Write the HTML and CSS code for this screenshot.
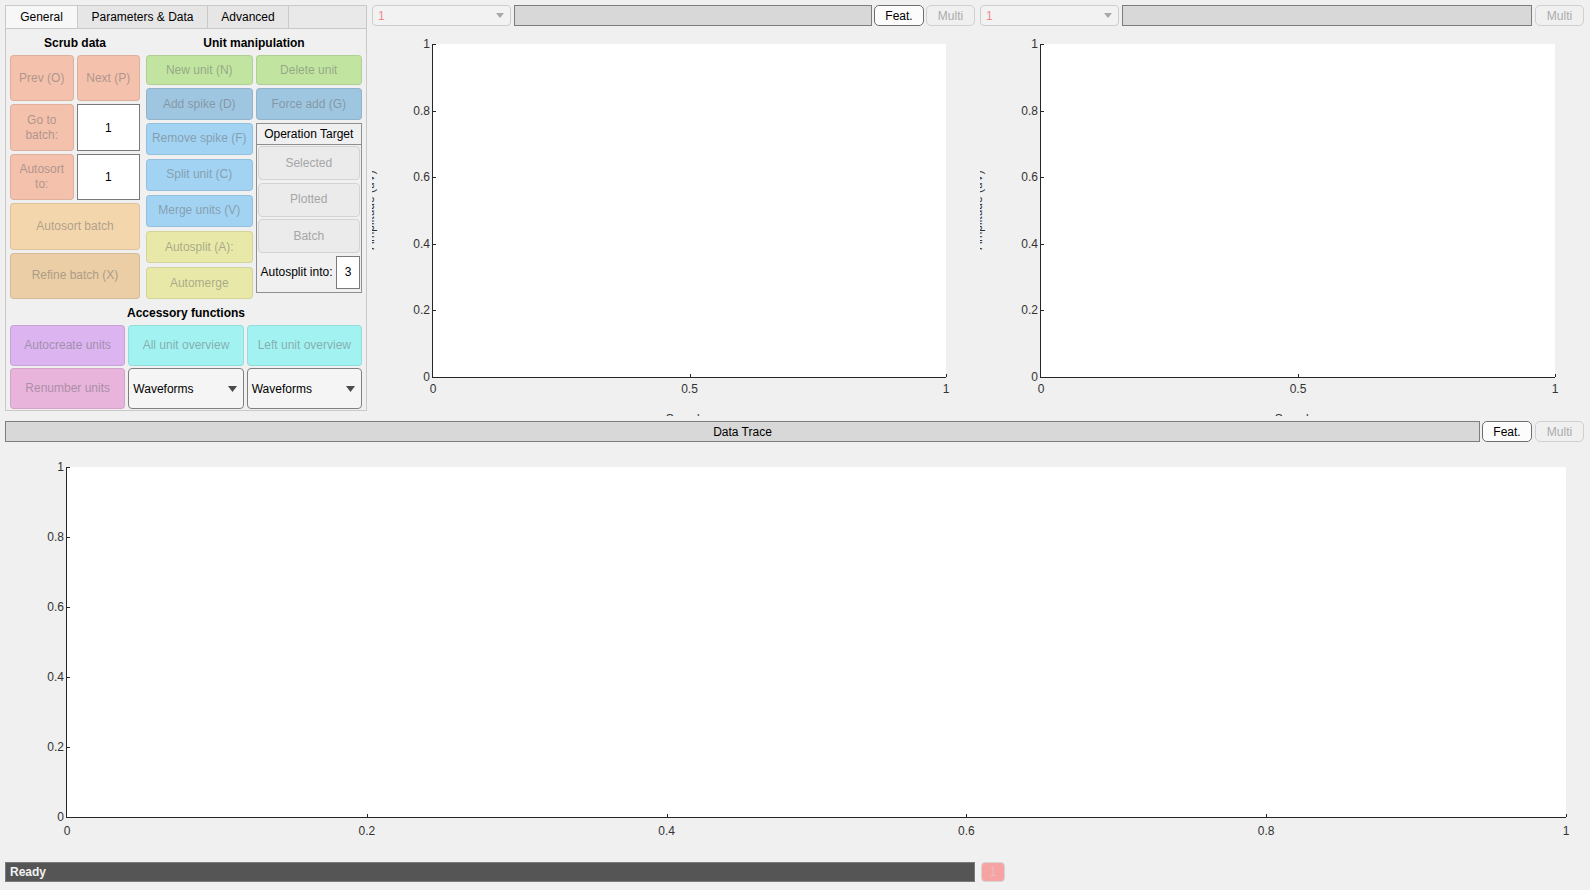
FILE: index.html
```html
<!DOCTYPE html>
<html>
<head>
<meta charset="utf-8">
<title>Spike sorter</title>
<link rel="stylesheet" href="styles.css">
</head>
<body>
<div class="app">
  <div class="top">
    <section class="panel">
      <div class="tabs">
        <div class="tab tab-general tab-active">General</div>
        <div class="tab tab-params">Parameters &amp; Data</div>
        <div class="tab tab-adv">Advanced</div>
        <div class="tab tab-fill"></div>
      </div>
      <div class="panel-body">
        <div class="section-row">
          <div class="scrub">
            <h3 class="heading">Scrub data</h3>
            <div class="scrub-grid">
              <div class="btn c-salmon">Prev (O)</div>
              <div class="btn c-salmon">Next (P)</div>
              <div class="btn c-salmon">Go to batch:</div>
              <div class="field">1</div>
              <div class="btn c-salmon">Autosort to:</div>
              <div class="field">1</div>
              <div class="btn c-peach span2">Autosort batch</div>
              <div class="btn c-tan span2">Refine batch (X)</div>
            </div>
          </div>
          <div class="unit">
            <h3 class="heading">Unit manipulation</h3>
            <div class="unit-grid">
              <div class="btn c-green">New unit (N)</div>
              <div class="btn c-green">Delete unit</div>
              <div class="btn c-steel">Add spike (D)</div>
              <div class="btn c-steel">Force add (G)</div>
              <div class="unit-col">
                <div class="btn c-sky">Remove spike (F)</div>
                <div class="btn c-sky">Split unit (C)</div>
                <div class="btn c-sky">Merge units (V)</div>
                <div class="btn c-yellow">Autosplit (A):</div>
                <div class="btn c-yellow">Automerge</div>
              </div>
              <div class="optarget">
                <div class="optarget-title">Operation Target</div>
                <div class="optarget-list">
                  <div class="btn btn-gray">Selected</div>
                  <div class="btn btn-gray">Plotted</div>
                  <div class="btn btn-gray">Batch</div>
                  <div class="split-row">
                    <span>Autosplit into:</span>
                    <div class="split-input">3</div>
                  </div>
                </div>
              </div>
            </div>
          </div>
        </div>
        <h3 class="heading acc-heading">Accessory functions</h3>
        <div class="acc-grid">
          <div class="btn c-violet">Autocreate units</div>
          <div class="btn c-cyan">All unit overview</div>
          <div class="btn c-cyan">Left unit overview</div>
          <div class="btn c-pink">Renumber units</div>
          <div class="select">
            <span>Waveforms</span>
            <svg class="sel-arrow" width="9" height="6" viewBox="0 0 9 6"><path d="M0 0H9L4.5 6Z" fill="#4a4a4a"/></svg>
          </div>
          <div class="select">
            <span>Waveforms</span>
            <svg class="sel-arrow" width="9" height="6" viewBox="0 0 9 6"><path d="M0 0H9L4.5 6Z" fill="#4a4a4a"/></svg>
          </div>
        </div>
      </div>
    </section>

    <div class="axcol axcol-1">
      <div class="axhead">
        <div class="dd"><span>1</span><svg width="8" height="5" viewBox="0 0 8 5"><path d="M0 0H8L4 5Z" fill="#a8a8a8"/></svg></div>
        <div class="graybar"></div>
        <div class="hbtn hbtn-feat">Feat.</div>
        <div class="hbtn hbtn-multi">Multi</div>
      </div>
      <div class="axes">
        <div class="plot">
          <span class="yt" style="top:0%"></span>
          <span class="yt" style="top:20%"></span>
          <span class="yt" style="top:40%"></span>
          <span class="yt" style="top:60%"></span>
          <span class="yt" style="top:80%"></span>
          <span class="yl" style="top:0%">1</span>
          <span class="yl" style="top:20%">0.8</span>
          <span class="yl" style="top:40%">0.6</span>
          <span class="yl" style="top:60%">0.4</span>
          <span class="yl" style="top:80%">0.2</span>
          <span class="yl" style="top:100%">0</span>
          <span class="xt" style="left:50%"></span>
          <span class="xt" style="left:100%"></span>
          <span class="xl" style="left:0%">0</span>
          <span class="xl" style="left:50%">0.5</span>
          <span class="xl" style="left:100%">1</span>
        </div>
        <span class="ylabel">Amplitude (uV)</span>
        <span class="xlabel">Samples</span>
      </div>
    </div>

    <div class="axcol axcol-2">
      <div class="axhead">
        <div class="dd"><span>1</span><svg width="8" height="5" viewBox="0 0 8 5"><path d="M0 0H8L4 5Z" fill="#a8a8a8"/></svg></div>
        <div class="graybar"></div>
        <div class="hbtn hbtn-multi hbtn-wide">Multi</div>
      </div>
      <div class="axes axes-2">
        <div class="plot">
          <span class="yt" style="top:0%"></span>
          <span class="yt" style="top:20%"></span>
          <span class="yt" style="top:40%"></span>
          <span class="yt" style="top:60%"></span>
          <span class="yt" style="top:80%"></span>
          <span class="yl" style="top:0%">1</span>
          <span class="yl" style="top:20%">0.8</span>
          <span class="yl" style="top:40%">0.6</span>
          <span class="yl" style="top:60%">0.4</span>
          <span class="yl" style="top:80%">0.2</span>
          <span class="yl" style="top:100%">0</span>
          <span class="xt" style="left:50%"></span>
          <span class="xt" style="left:100%"></span>
          <span class="xl" style="left:0%">0</span>
          <span class="xl" style="left:50%">0.5</span>
          <span class="xl" style="left:100%">1</span>
        </div>
        <span class="ylabel">Amplitude (uV)</span>
        <span class="xlabel">Samples</span>
      </div>
    </div>
  </div>

  <div class="tracebar">
    <div class="tracetitle">Data Trace</div>
    <div class="hbtn hbtn-feat">Feat.</div>
    <div class="hbtn hbtn-multi hbtn-wide">Multi</div>
  </div>

  <div class="trace-axes">
    <div class="plot plot-trace">
      <span class="yt" style="top:0%"></span>
      <span class="yt" style="top:20%"></span>
      <span class="yt" style="top:40%"></span>
      <span class="yt" style="top:60%"></span>
      <span class="yt" style="top:80%"></span>
      <span class="yl" style="top:0%">1</span>
      <span class="yl" style="top:20%">0.8</span>
      <span class="yl" style="top:40%">0.6</span>
      <span class="yl" style="top:60%">0.4</span>
      <span class="yl" style="top:80%">0.2</span>
      <span class="yl" style="top:100%">0</span>
      <span class="xt" style="left:20%"></span>
      <span class="xt" style="left:40%"></span>
      <span class="xt" style="left:60%"></span>
      <span class="xt" style="left:80%"></span>
      <span class="xt" style="left:100%"></span>
      <span class="xl" style="left:0%">0</span>
      <span class="xl" style="left:20%">0.2</span>
      <span class="xl" style="left:40%">0.4</span>
      <span class="xl" style="left:60%">0.6</span>
      <span class="xl" style="left:80%">0.8</span>
      <span class="xl" style="left:100%">1</span>
    </div>
  </div>

  <div class="statusrow">
    <div class="status">Ready</div>
    <div class="badge">1</div>
  </div>
</div>
</body>
</html>
```

FILE: styles.css
```css
* { box-sizing: border-box; }
html, body { margin: 0; padding: 0; }
body {
  background: #f0f0f0;
  font-family: "Liberation Sans", Arial, sans-serif;
  font-size: 12px;
  color: #000;
  width: 1590px;
  height: 890px;
  overflow: hidden;
}
.app {
  display: flex;
  flex-direction: column;
  padding: 5px 6px 0 5px;
  height: 890px;
}
.top {
  display: flex;
  gap: 5px;
  height: 411px;
  flex: none;
}

/* ---------- left panel ---------- */
.panel {
  width: 362px;
  height: 406px;
  flex: none;
  display: flex;
  flex-direction: column;
}
.tabs { display: flex; height: 23px; flex: none; }
.tab {
  height: 23px;
  line-height: 22px;
  text-align: center;
  background: #e6e6e6;
  border-top: 1px solid #c9c9c9;
  border-right: 1px solid #c9c9c9;
}
.tab-general { width: 73px; border-left: 1px solid #c9c9c9; }
.tab-params { width: 130px; }
.tab-adv { width: 81px; }
.tab-fill { flex: 1; background: #e9e9e9; }
.tab-active { background: #f7f7f7; }

.panel-body {
  flex: 1;
  border: 1px solid #c9c9c9;
  padding: 4px 4px 1px;
  display: flex;
  flex-direction: column;
}
.section-row { display: flex; gap: 6px; }
.scrub { width: 130px; flex: none; display: flex; flex-direction: column; gap: 2px; }
.unit { flex: 1; display: flex; flex-direction: column; gap: 2px; }
.heading {
  margin: 0;
  height: 20px;
  line-height: 20px;
  font-size: 12px;
  font-weight: bold;
  text-align: center;
}
.scrub-grid {
  display: grid;
  grid-template-columns: 1fr 1fr;
  grid-template-rows: repeat(5, 1fr);
  gap: 3px;
  height: 244px;
}
.span2 { grid-column: span 2; }
.unit-grid {
  display: grid;
  grid-template-columns: 1fr 1fr;
  grid-template-rows: 30px 32px 1fr;
  gap: 3px;
  height: 244px;
}
.unit-col { display: flex; flex-direction: column; gap: 4.5px; }
.unit-col .btn { flex: 1; }
.acc-heading { margin-top: 4px; }
.acc-grid {
  margin-top: 2px;
  display: grid;
  grid-template-columns: repeat(3, 1fr);
  grid-template-rows: 41px 41px;
  gap: 2px 3px;
}

.btn {
  border: 1px solid rgba(0, 0, 0, 0.09);
  border-radius: 4px;
  color: rgba(105, 105, 105, 0.5);
  display: flex;
  align-items: center;
  justify-content: center;
  text-align: center;
  padding: 0 3px;
  line-height: 15px;
}
.c-salmon { background: #f4c1ad; }
.c-peach { background: #f4d6ad; }
.c-tan { background: #ebcea5; }
.c-green { background: #c1e5a1; }
.c-steel { background: #9fc6e0; }
.c-sky { background: #a2d3f3; }
.c-yellow { background: #e8e9a8; }
.c-violet { background: #dbb4f0; }
.c-pink { background: #e8b4dc; }
.c-cyan { background: #a2f2f2; }

.field {
  background: #fff;
  border: 1px solid #7a7a7a;
  display: flex;
  align-items: center;
  justify-content: center;
}

.optarget {
  align-self: start;
  height: 170px;
  border: 1px solid #8f8f8f;
  display: flex;
  flex-direction: column;
}
.optarget-title {
  height: 21px;
  line-height: 20px;
  text-align: center;
  border-bottom: 1px solid #8f8f8f;
  flex: none;
}
.optarget-list {
  flex: 1;
  display: flex;
  flex-direction: column;
  gap: 2.5px;
  padding: 1px 1px 2px;
}
.btn-gray {
  background: #ebebeb;
  border-color: #d3d3d3;
  height: 34px;
  flex: none;
  color: #a6a6a6;
}
.split-row {
  display: flex;
  align-items: center;
  justify-content: space-between;
  height: 33px;
  padding-left: 3px;
}
.split-input {
  width: 24px;
  height: 33px;
  background: #fff;
  border: 1px solid #7a7a7a;
  display: flex;
  align-items: center;
  justify-content: center;
}

.select {
  background: #f5f5f5;
  border: 1px solid #7f7f7f;
  border-radius: 4px;
  display: flex;
  align-items: center;
  justify-content: space-between;
  padding: 0 6px 0 4px;
}

/* ---------- axes columns ---------- */
.axcol { display: flex; flex-direction: column; min-width: 0; }
.axcol-1 { width: 603px; flex: none; }
.axcol-2 { width: 604px; flex: none; }
.axhead { height: 21px; display: flex; gap: 2px; flex: none; }
.dd {
  width: 139px;
  flex: none;
  margin-right: 1px;
  border: 1px solid #cdcdcd;
  border-radius: 4px;
  background: #f2f2f2;
  display: flex;
  align-items: center;
  justify-content: space-between;
  padding: 0 6px 0 5px;
  color: #f08a8a;
}
.graybar {
  flex: 1;
  background: #d8d8d8;
  border: 1px solid #7d7d7d;
}
.hbtn {
  width: 50px;
  flex: none;
  border-radius: 5px;
  display: flex;
  align-items: center;
  justify-content: center;
}
.hbtn-feat { background: #fcfcfc; border: 1px solid #6e6e6e; color: #000; }
.hbtn-multi { width: 49px; background: #f0f0f0; border: 1px solid #d0d0d0; color: #ababab; }
.hbtn-wide { margin-left: 1px; }

.axes {
  flex: 1;
  position: relative;
  overflow: hidden;
  padding: 18px 29px 38px 60px;
}
.axes-2 { padding-left: 60px; }
.plot {
  position: relative;
  height: 100%;
  background: #fff;
  border-left: 1px solid #262626;
  border-bottom: 1px solid #262626;
  color: #333;
}
.yt { position: absolute; left: 0; width: 3px; height: 1px; background: #262626; }
.xt { position: absolute; bottom: 0; width: 1px; height: 3px; background: #262626; }
.yl {
  position: absolute;
  right: calc(100% + 3px);
  transform: translateY(-50%);
  line-height: 14px;
  white-space: nowrap;
}
.xl {
  position: absolute;
  top: calc(100% + 5px);
  transform: translateX(-50%);
  line-height: 14px;
  white-space: nowrap;
}
.plot-trace .xl { top: calc(100% + 7px); }
.ylabel {
  position: absolute;
  left: -2px;
  top: 184px;
  line-height: 14px;
  white-space: nowrap;
  color: #333;
  transform: translate(-50%, -50%) rotate(-90deg);
}
.xlabel {
  position: absolute;
  left: 317px;
  top: 386px;
  line-height: 14px;
  white-space: nowrap;
  color: #333;
  transform: translateX(-50%);
}
.axes-2 .xlabel { left: 318px; }

/* ---------- trace ---------- */
.tracebar {
  display: flex;
  gap: 2px;
  height: 21px;
  margin-top: 5px;
  flex: none;
}
.tracetitle {
  flex: 1;
  background: #d8d8d8;
  border: 1px solid #7d7d7d;
  text-align: center;
  line-height: 20px;
}
.trace-axes {
  height: 415px;
  flex: none;
  position: relative;
  padding: 25px 18px 39px 61px;
}

/* ---------- status ---------- */
.statusrow { display: flex; margin-top: 5px; height: 20px; flex: none; }
.status {
  width: 970px;
  background: #555;
  border: 1px solid #7a7a7a;
  color: #f2f2f2;
  font-weight: bold;
  padding-left: 4px;
  line-height: 18px;
}
.badge {
  margin-left: 6px;
  width: 24px;
  background: #f5a3a3;
  border: 1px solid #d6d6d6;
  border-radius: 4px;
  color: #e9bcbc;
  text-align: center;
  line-height: 18px;
}
```
